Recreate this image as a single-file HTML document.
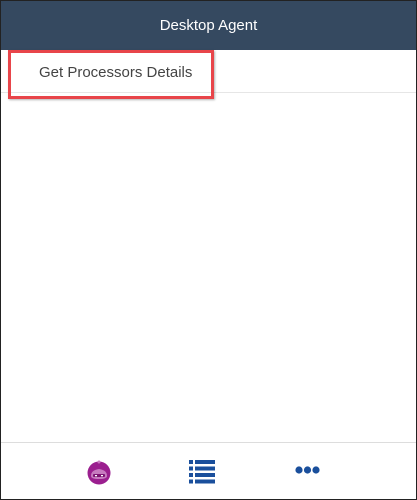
<!DOCTYPE html>
<html><head><style>
body{margin:0;width:417px;height:500px;overflow:hidden;font-family:"Liberation Sans",Arial,sans-serif;background:#fff;}
.frame{position:absolute;left:0;top:0;width:415px;height:498px;border:1px solid #222;}
.hdr{position:absolute;left:1px;top:1px;width:415px;height:49px;background:#354960;color:#fff;font-size:15px;text-align:center;line-height:50px;}
.line1{position:absolute;left:1px;top:92px;width:415px;height:1px;background:#e6e6e6;}
.item{position:absolute;left:39px;top:64px;font-size:15px;color:#444;}
.red{position:absolute;left:8px;top:50px;width:200px;height:43px;border:3px solid #e8454a;box-shadow:1px 1px 2px rgba(0,0,0,.3);}
.line2{position:absolute;left:1px;top:442px;width:415px;height:1px;background:#ddd;}
</style></head><body>
<div class="frame"></div>
<div class="hdr">Desktop Agent</div>
<div class="line1"></div>
<div class="item">Get Processors Details</div>
<div class="red"></div>
<div class="line2"></div>
<svg style="position:absolute;left:86px;top:459px" width="26" height="26" viewBox="0 0 26 26">
<circle cx="13" cy="14" r="11.5" fill="#9b1f8f"/>
<circle cx="13" cy="3" r="1.5" fill="#c77bc0"/>
<path d="M5 17 Q5 11 13 10 Q21 11 21 17 Q21 20 13 20 Q5 20 5 17Z" fill="#c77bc0"/>
<rect x="7" y="15" width="12" height="3" rx="1" fill="#7d1573"/>
<rect x="9" y="16" width="2" height="1.3" fill="#fff"/><rect x="15" y="16" width="2" height="1.3" fill="#fff"/>
</svg>
<svg style="position:absolute;left:189px;top:460px" width="26" height="24" viewBox="0 0 26 24">
<g fill="#1a4f9c"><rect x="0" y="0" width="4" height="4"/><rect x="6" y="0" width="20" height="4"/>
<rect x="0" y="6.5" width="4" height="4"/><rect x="6" y="6.5" width="20" height="4"/>
<rect x="0" y="13" width="4" height="4"/><rect x="6" y="13" width="20" height="4"/>
<rect x="0" y="19.5" width="4" height="4"/><rect x="6" y="19.5" width="20" height="4"/></g>
</svg>
<svg style="position:absolute;left:295px;top:465px" width="26" height="10" viewBox="0 0 26 10">
<g fill="#1a4f9c"><circle cx="4" cy="5" r="3.6"/><circle cx="12.5" cy="5" r="3.6"/><circle cx="21" cy="5" r="3.6"/></g>
</svg>
</body></html>
